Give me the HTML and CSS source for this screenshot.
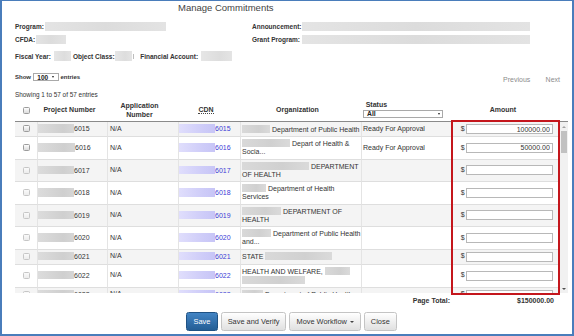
FILE: index.html
```html
<!DOCTYPE html>
<html>
<head>
<meta charset="utf-8">
<title>Manage Commitments</title>
<link rel="stylesheet" href="styles.css">
</head>
<body>
<div class="frame">
  <div class="title">Manage Commitments</div>

  <div class="info">
    <div class="field"><span class="lbl">Program:</span><span class="rd ib w121"></span></div>
    <div class="field r"><span class="lbl">Announcement:</span><span class="rd ib w228"></span></div>
    <div class="field"><span class="lbl">CFDA:</span><span class="rd ib w30"></span></div>
    <div class="field r"><span class="lbl">Grant Program:</span><span class="rd ib w228"></span></div>
  </div>

  <div class="fiscal">
    <span class="lbl">Fiscal Year:</span><span class="rd fb w17 ml2"></span>
    <span class="lbl ml2">Object Class:</span><span class="rd fb w17 ml0"></span><span class="tick"></span>
    <span class="lbl ml6">Financial Account:</span><span class="rd fb w31 ml3"></span>
  </div>

  <div class="toolbar">
    <div class="len"><span>Show</span><span class="sel s100">100<i class="arr"></i></span><span class="ent">entries</span></div>
    <div class="pager"><span>Previous</span><span class="next">Next</span></div>
  </div>

  <div class="showing">Showing 1 to 57 of 57 entries</div>

  <div class="twrap">
    <div class="thead-w">
      <table class="grid">
        <colgroup><col class="c1"><col class="c2"><col class="c3"><col class="c4"><col class="c5"><col class="c6"><col class="c7"></colgroup>
        <tr>
          <th class="h-cb"><span class="cb"></span></th>
          <th class="h-pn">Project Number</th>
          <th>Application<br>Number</th>
          <th><span class="abbr">CDN</span></th>
          <th>Organization</th>
          <th class="h-st"><div class="st-l">Status</div><div class="sel sall">All<i class="arr"></i></div></th>
          <th class="h-amt">Amount</th>
        </tr>
      </table>
    </div>
    <div class="body-w">
      <div class="vp">
        <table class="grid">
          <colgroup><col class="c1"><col class="c2"><col class="c3"><col class="c4"><col class="c5"><col class="c6"><col class="c7"></colgroup>
          <tr>
            <td class="ck"><span class="cb"></span></td>
            <td class="pn"><span class="rd p w36"></span>6015</td>
            <td class="an">N/A</td>
            <td class="cdn"><span class="rd c w36"></span><span class="lnk">6015</span></td>
            <td class="org"><span class="rd o w28"></span> Department of Public Health</td>
            <td class="st">Ready For Approval</td>
            <td class="am"><div class="amt">$<input class="inp" value="100000.00"></div></td>
          </tr>
          <tr>
            <td class="ck"><span class="cb"></span></td>
            <td class="pn"><span class="rd p w37"></span>6016</td>
            <td class="an">N/A</td>
            <td class="cdn"><span class="rd c w36"></span><span class="lnk">6016</span></td>
            <td class="org"><span class="rd o w48"></span> Depart of Health &amp;<br>Socia...</td>
            <td class="st">Ready For Approval</td>
            <td class="am"><div class="amt">$<input class="inp" value="50000.00"></div></td>
          </tr>
          <tr>
            <td class="ck"><span class="cb dis"></span></td>
            <td class="pn"><span class="rd p w36"></span>6017</td>
            <td class="an">N/A</td>
            <td class="cdn"><span class="rd c w36"></span><span class="lnk">6017</span></td>
            <td class="org"><span class="rd o w67"></span> DEPARTMENT<br>OF HEALTH</td>
            <td class="st"></td>
            <td class="am"><div class="amt">$<input class="inp" value=""></div></td>
          </tr>
          <tr>
            <td class="ck"><span class="cb dis"></span></td>
            <td class="pn"><span class="rd p w36"></span>6018</td>
            <td class="an">N/A</td>
            <td class="cdn"><span class="rd c w36"></span><span class="lnk">6018</span></td>
            <td class="org"><span class="rd o w24"></span> Department of Health<br>Services</td>
            <td class="st"></td>
            <td class="am"><div class="amt">$<input class="inp" value=""></div></td>
          </tr>
          <tr>
            <td class="ck"><span class="cb dis"></span></td>
            <td class="pn"><span class="rd p w36"></span>6019</td>
            <td class="an">N/A</td>
            <td class="cdn"><span class="rd c w36"></span><span class="lnk">6019</span></td>
            <td class="org"><span class="rd o w39"></span> DEPARTMENT OF<br>HEALTH</td>
            <td class="st"></td>
            <td class="am"><div class="amt">$<input class="inp" value=""></div></td>
          </tr>
          <tr>
            <td class="ck"><span class="cb dis"></span></td>
            <td class="pn"><span class="rd p w36"></span>6020</td>
            <td class="an">N/A</td>
            <td class="cdn"><span class="rd c w36"></span><span class="lnk">6020</span></td>
            <td class="org"><span class="rd o w29"></span> Department of Public Health<br>and...</td>
            <td class="st"></td>
            <td class="am"><div class="amt">$<input class="inp" value=""></div></td>
          </tr>
          <tr>
            <td class="ck"><span class="cb dis"></span></td>
            <td class="pn"><span class="rd p w36"></span>6021</td>
            <td class="an">N/A</td>
            <td class="cdn"><span class="rd c w36"></span><span class="lnk">6021</span></td>
            <td class="org">STATE <span class="rd o w67"></span></td>
            <td class="st"></td>
            <td class="am"><div class="amt">$<input class="inp" value=""></div></td>
          </tr>
          <tr>
            <td class="ck"><span class="cb dis"></span></td>
            <td class="pn"><span class="rd p w36"></span>6022</td>
            <td class="an">N/A</td>
            <td class="cdn"><span class="rd c w36"></span><span class="lnk">6022</span></td>
            <td class="org">HEALTH AND WELFARE, <span class="rd o w25"></span><br><span class="rd o w63"></span></td>
            <td class="st"></td>
            <td class="am"><div class="amt">$<input class="inp" value=""></div></td>
          </tr>
          <tr>
            <td class="ck"><span class="cb dis"></span></td>
            <td class="pn"><span class="rd p w36"></span>6023</td>
            <td class="an">N/A</td>
            <td class="cdn"><span class="rd c w36"></span><span class="lnk">6023</span></td>
            <td class="org"><span class="rd o w21"></span> Department of Public Health</td>
            <td class="st"></td>
            <td class="am"><div class="amt">$<input class="inp" value=""></div></td>
          </tr>
        </table>
      </div>
      <div class="sbar">
        <div class="sb-btn"><i class="tri up"></i></div>
        <div class="thumb"></div>
        <div class="sb-fill"></div>
        <div class="sb-btn"><i class="tri down"></i></div>
      </div>
    </div>
    <div class="hl"></div>
  </div>

  <div class="total"><span class="tl">Page Total:</span><span class="tv">$150000.00</span></div>

  <div class="btns">
    <button class="btn primary">Save</button>
    <button class="btn">Save and Verify</button>
    <button class="btn">Move Workflow<i class="caret"></i></button>
    <button class="btn">Close</button>
  </div>
</div>
</body>
</html>
```

FILE: styles.css
```css
* { box-sizing: border-box; }
html, body { margin: 0; padding: 0; background: #fff; }
body { font-family: "Liberation Sans", Arial, sans-serif; color: #333; }

.frame {
  width: 574px;
  height: 336px;
  border: solid #4a7dbb;
  border-width: 1px 2px 2px 2px;
  padding: 0 4px 0 13px;
  overflow: hidden;
}

.title {
  margin: 1px 0 0 163px;
  height: 12px;
  line-height: 12px;
  font-size: 9.5px;
  color: #444;
  white-space: nowrap;
}

/* redaction bars */
.rd { display: inline-block; }
.ib { height: 9px; background: linear-gradient(90deg, #e4e4e4, #dcdcdc 50%, #e3e3e3); }
.fb { height: 10px; background: linear-gradient(90deg, #e6e6e6, #dddddd 60%, #e4e4e4); }
.rd.p { height: 8.5px; vertical-align: -1.8px; background: linear-gradient(90deg, #dcdcdc, #cfcfcf 70%, #d6d6d6); }
.rd.c { height: 8.5px; vertical-align: -1.8px; background: linear-gradient(90deg, #e0defc, #cdcbf8 70%, #c7c5f6); }
.rd.o { height: 8px; vertical-align: -1.5px; background: linear-gradient(90deg, #d9d9d9, #d0d0d0 60%, #dadada); }

.w17 { width: 17px; } .w21 { width: 21px; } .w24 { width: 24px; } .w25 { width: 25px; }
.w28 { width: 28px; } .w29 { width: 29px; } .w30 { width: 30px; } .w31 { width: 31px; }
.w36 { width: 36px; } .w37 { width: 37px; } .w39 { width: 39px; } .w48 { width: 48px; }
.w63 { width: 63px; } .w67 { width: 67px; } .w121 { width: 121px; } .w228 { width: 228px; }
.ml0 { margin-left: 0.5px; } .ml2 { margin-left: 2.5px; } .ml3 { margin-left: 2.7px; } .ml6 { margin-left: 6.3px; }

.info {
  margin-top: 6px;
  display: grid;
  grid-template-columns: 237px 1fr;
  grid-auto-rows: 13px;
}
.field { display: flex; align-items: center; white-space: nowrap; }
.lbl { font-size: 6.5px; font-weight: bold; color: #333; white-space: nowrap; }
.field .lbl { margin-right: 1px; }
.field.r .lbl { width: 50px; margin-right: 0; }

.fiscal { margin-top: 4px; height: 12px; display: flex; align-items: center; }
.tick { width: 1px; height: 5px; background: #bdbdbd; margin-left: 0.8px; }

.toolbar {
  margin-top: 8px;
  height: 14px;
  display: flex;
  justify-content: space-between;
  align-items: flex-start;
}
.len {
  height: 14px;
  display: flex;
  align-items: center;
  font-size: 6px;
  font-weight: bold;
  color: #333;
}
.sel {
  display: inline-flex;
  align-items: center;
  justify-content: space-between;
  height: 8px;
  border: 1px solid #a9a9a9;
  background: #fff;
  font-size: 6.5px;
  font-weight: bold;
  color: #222;
}
.s100 { width: 25.5px; margin-left: 2.3px; padding: 0 4px 0 3px; }
.ent { margin-left: 1.7px; }
.arr {
  display: block;
  width: 0; height: 0;
  border-left: 1.7px solid transparent;
  border-right: 1.7px solid transparent;
  border-top: 2.6px solid #222;
}
.pager {
  padding: 2.5px 8px 0 0;
  height: 14px;
  line-height: 14px;
  font-size: 7px;
  color: #8c8c8c;
  display: flex;
}
.next { margin-left: 15.3px; }

.showing {
  margin-top: 6px;
  height: 10px;
  line-height: 10px;
  font-size: 6.4px;
  color: #333;
}

/* table */
.twrap { position: relative; }
.thead-w { padding-right: 8px; border-bottom: 1px solid #8a8a8a; }
table.grid {
  border-collapse: separate;
  border-spacing: 0;
  table-layout: fixed;
  width: 545px;
}
.c1 { width: 22px; } .c2 { width: 70px; } .c3 { width: 71px; } .c4 { width: 62px; }
.c5 { width: 121px; } .c6 { width: 90px; } .c7 { width: 109px; }

th {
  height: 21px;
  padding: 0 6px 0 0;
  font-size: 7px;
  line-height: 8.7px;
  font-weight: bold;
  text-align: center;
  vertical-align: middle;
  color: #333;
  white-space: nowrap;
}
th.h-cb { padding: 0; }
th.h-pn { padding-right: 5px; }
th.h-amt { padding-right: 5px; }
th.h-st { text-align: left; vertical-align: top; padding: 0 0 0 2px; }
.st-l { height: 9.5px; line-height: 9px; padding-left: 2.7px; }
.sall { width: 80px; padding: 0 2px 0 3px; font-size: 6.8px; }
.abbr { border-bottom: 1px dotted #444; }

.cb {
  display: inline-block;
  width: 7px;
  height: 7px;
  border: 1px solid #9c9c9c;
  border-radius: 1.5px;
  background: linear-gradient(#fdfdfd, #dcdcdc);
  vertical-align: middle;
}
.cb.dis { border-color: #c6c6c6; background: linear-gradient(#fafafa, #ececec); }

.body-w { display: flex; height: 171px; border-bottom: 1px solid #6e6e6e; }
.vp { width: 545px; height: 171px; overflow: hidden; }

td {
  padding: 2px 2px;
  font-size: 7px;
  line-height: 8.5px;
  color: #333;
  border-bottom: 1px solid #dedede;
  border-left: 1px solid #e4e4e4;
  vertical-align: middle;
  white-space: nowrap;
  overflow: hidden;
}
td.ck { border-left: none; text-align: center; padding: 2px 0; }
tr:nth-child(odd) td { background: #f4f4f4; }
td.pn { padding-left: 0; }
td.cdn { padding-left: 0; }
td.org { padding-left: 1px; }
td.st { padding-left: 1px; }
td.am { padding: 2px 6px 2px 8.7px; }
.lnk { color: #3b3bd6; }

.amt { display: flex; align-items: center; height: 10px; }
.inp {
  width: 87px;
  height: 10px;
  margin: 0 0 0 1.2px;
  padding: 0 2px;
  border: 1px solid #b8b8b8;
  background: #fff;
  font-family: "Liberation Sans", Arial, sans-serif;
  font-size: 7px;
  line-height: 8px;
  color: #333;
  text-align: right;
  outline: none;
}

.sbar {
  width: 8px;
  height: 171px;
  background: #f1f1f1;
  display: flex;
  flex-direction: column;
}
.sb-btn { height: 9px; display: flex; align-items: center; justify-content: center; }
.thumb { height: 22px; margin: 0 1px; background: #c1c1c1; }
.sb-fill { flex: 1; }
.tri { display: block; width: 0; height: 0; border-left: 2px solid transparent; border-right: 2px solid transparent; }
.tri.up { border-bottom: 2.5px solid #a3a3a3; }
.tri.down { border-top: 2.5px solid #505050; }

.hl {
  position: absolute;
  left: 436px;
  top: 20px;
  width: 109px;
  height: 175px;
  border: 2px solid #c4161c;
  pointer-events: none;
}

.total {
  margin-top: 3px;
  height: 10px;
  line-height: 10px;
  display: grid;
  grid-template-columns: 1fr 117px;
  font-size: 7px;
  font-weight: bold;
  color: #333;
}
.tl { text-align: right; padding-right: 1px; }
.tv { text-align: right; padding-right: 14px; }

.btns { margin-top: 6px; display: flex; justify-content: center; gap: 3px; }
.btn {
  height: 19px;
  padding: 0 6px;
  border: 1px solid #c4c4c4;
  border-radius: 2.5px;
  background: linear-gradient(#ffffff, #e0e0e0);
  font-family: "Liberation Sans", Arial, sans-serif;
  font-size: 7.4px;
  color: #333;
  display: flex;
  align-items: center;
  white-space: nowrap;
}
.btn.primary {
  background: linear-gradient(#4284c4, #245e95);
  border-color: #1f5284;
  color: #fff;
  padding: 0 6.3px;
}
.caret {
  display: block;
  width: 0; height: 0;
  margin-left: 3px;
  border-left: 2px solid transparent;
  border-right: 2px solid transparent;
  border-top: 2.5px solid #444;
}
```
